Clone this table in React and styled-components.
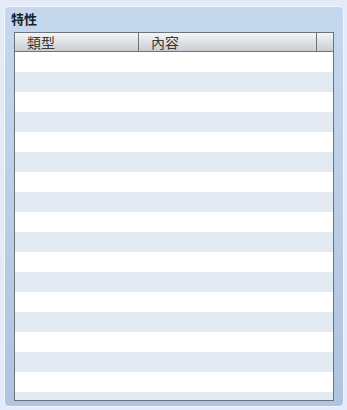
import React from "react";
import styled, { createGlobalStyle } from "styled-components";

const columns = [
  { key: "type", label: "類型", width: 123 },
  { key: "content", label: "內容", width: 177 },
  { key: "spare", label: "", width: 16 },
];

const rowCount = 18;

export default function App() {
  return (
    <>
      <GlobalStyle />
      <Panel>
        <Title>特性</Title>
        <Grid>
          <HeaderRow>
            {columns.map((col, i) => (
              <HeaderCell key={col.key} $width={col.width} $last={i === columns.length - 1}>
                {col.label}
              </HeaderCell>
            ))}
          </HeaderRow>
          <Body>
            {Array.from({ length: rowCount }).map((_, i) => (
              <Row key={i} $odd={i % 2 === 1} />
            ))}
          </Body>
        </Grid>
      </Panel>
    </>
  );
}

// Styles
const GlobalStyle = createGlobalStyle`
  html, body {
    margin: 0;
    padding: 0;
    background: #e2ebf7;
    font-family: "Noto Sans CJK TC", "Liberation Sans", sans-serif;
  }
`;

const Panel = styled.div`
  box-sizing: border-box;
  width: 340px;
  height: 401px;
  margin: 6px 0 0 4px;
  padding: 3px 5px 5px;
  border: 1px solid #f1f6fc;
  border-radius: 5px;
  background: linear-gradient(#c5d8ee, #afc4dd);
  display: flex;
  flex-direction: column;
`;

const Title = styled.div`
  height: 18px;
  line-height: 18px;
  margin: 0 0 4px 1px;
  font-size: 13px;
  font-weight: bold;
  color: #14202c;
`;

const Grid = styled.div`
  box-sizing: border-box;
  flex: 1;
  margin: 0 4px;
  border: 1px solid #6c7379;
  background: #ffffff;
  display: flex;
  flex-direction: column;
  overflow: hidden;
`;

const HeaderRow = styled.div`
  display: flex;
  height: 18px;
  border-bottom: 1px solid #6c7379;
  background: linear-gradient(#f3f5f7, #c9cdd2);
`;

const HeaderCell = styled.div`
  box-sizing: border-box;
  width: ${(p) => p.$width + (p.$last ? 0 : 1)}px;
  padding-left: ${(p) => (p.$last ? 0 : 12)}px;
  border-right: ${(p) => (p.$last ? "none" : "1px solid #6c7379")};
  flex: ${(p) => (p.$last ? 1 : "none")};
  font-size: 14px;
  line-height: 18px;
  color: #3a3630;
  white-space: nowrap;
  overflow: hidden;
`;

const Body = styled.div`
  flex: 1;
  overflow: hidden;
`;

const Row = styled.div`
  height: 20px;
  background: ${(p) => (p.$odd ? "#e3eaf2" : "#ffffff")};
`;
